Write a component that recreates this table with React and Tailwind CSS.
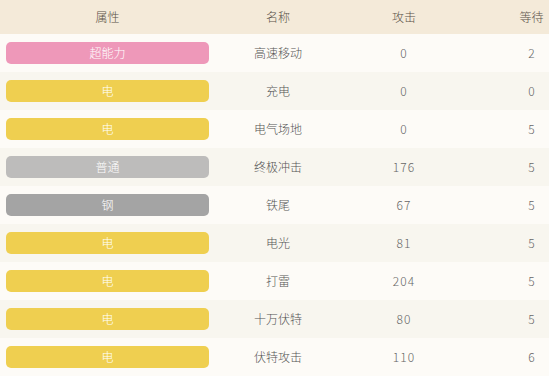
const TYPE_STYLES = {
  超能力: 'bg-[#ee98b9]',
  电: 'bg-[#efcf50]',
  普通: 'bg-[#bdbcbb]',
  钢: 'bg-[#a4a4a4]',
};

const moves = [
  { type: '超能力', name: '高速移动', power: 0, wait: 2 },
  { type: '电', name: '充电', power: 0, wait: 0 },
  { type: '电', name: '电气场地', power: 0, wait: 5 },
  { type: '普通', name: '终极冲击', power: 176, wait: 5 },
  { type: '钢', name: '铁尾', power: 67, wait: 5 },
  { type: '电', name: '电光', power: 81, wait: 5 },
  { type: '电', name: '打雷', power: 204, wait: 5 },
  { type: '电', name: '十万伏特', power: 80, wait: 5 },
  { type: '电', name: '伏特攻击', power: 110, wait: 6 },
];

export default function App() {
  return (
    <div
      className="w-[549px] h-[376px] overflow-hidden bg-[#fdfbf7] text-[12px] text-[#666] font-light"
      style={{ fontFamily: '"Noto Sans CJK SC", "Noto Sans", sans-serif' }}
    >
      <div className="w-[596px]">
        {/* 表头 */}
        <div className="grid grid-cols-[215px_126px_126px_129px] h-[34px] items-center bg-[#f4ead9] text-[#5a5148]">
          <div className="text-center">属性</div>
          <div className="text-center">名称</div>
          <div className="text-center">攻击</div>
          <div className="text-center">等待</div>
        </div>
        {moves.map((m, i) => (
          <div
            key={m.name}
            className={`grid grid-cols-[215px_126px_126px_129px] h-[38px] items-center ${
              i % 2 === 0 ? 'bg-[#fdfbf7]' : 'bg-[#f8f6ef]'
            }`}
          >
            <div className="px-[6px]">
              <div
                className={`h-[22px] rounded-[5px] flex items-center justify-center text-white ${TYPE_STYLES[m.type]}`}
              >
                {m.type}
              </div>
            </div>
            <div className="text-center text-[#555]">{m.name}</div>
            <div className="text-center tracking-[1px]">{m.power}</div>
            <div className="text-center">{m.wait}</div>
          </div>
        ))}
      </div>
    </div>
  );
}
